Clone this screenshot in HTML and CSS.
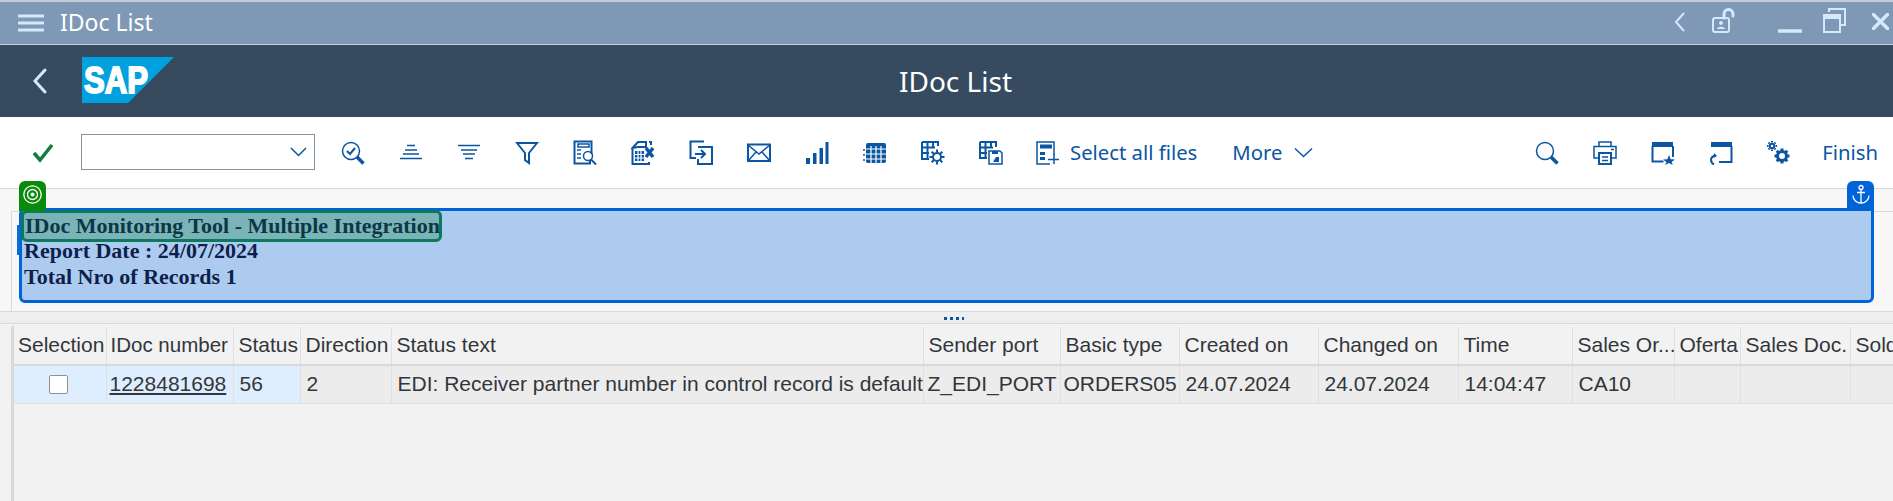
FILE: index.html
```html
<!DOCTYPE html>
<html lang="en">
<head>
<meta charset="utf-8">
<title>IDoc List</title>
<link rel="stylesheet" href="styles.css">
</head>
<body>
<div class="app">
  <div class="titlebar">
    <div class="menu-btn"><svg width="26" height="18" viewBox="0 0 26 18"><path d="M1 2h24M1 9h24M1 16h24" class="s-light2"/></svg></div>
    <div class="titlebar-text">IDoc List</div>
    <div class="window-tools">
      <svg class="wt-back" width="14" height="22" viewBox="0 0 14 22"><path d="M11 2 3 11l8 9" class="s-light"/></svg>
      <svg class="wt-lock" width="26" height="26" viewBox="0 0 26 26"><rect x="1" y="10" width="16" height="14" rx="2" class="s-light"/><path d="M12 10V6a4.500 4.500 0 0 1 9 0v2" class="s-light2"/><circle cx="9" cy="15" r="2" class="f-light"/><path d="M5 21c0-3 8-3 8 0z" class="f-light"/></svg>
      <svg class="wt-min" width="24" height="4" viewBox="0 0 24 4"><path d="M1 2h22" class="s-light3"/></svg>
      <svg class="wt-max" width="24" height="26" viewBox="0 0 24 26"><path d="M6 4V1h16v16h-4" class="s-light"/><rect x="1" y="7" width="16" height="17" class="s-light"/><rect x="1" y="7" width="16" height="4" class="f-light"/></svg>
      <svg class="wt-close" width="17" height="17" viewBox="0 0 17 17"><path d="M1.500 1.500l14 14M15.500 1.500l-14 14" class="s-light3"/></svg>
    </div>
  </div>

  <div class="appbar">
    <svg class="back" width="16" height="26" viewBox="0 0 16 26"><path d="M13 2 3 13l10 11" class="s-back"/></svg>
    <svg class="logo" width="92" height="46" viewBox="0 0 92 46"><polygon points="0,0 92,0 46,46 0,46" class="logo-bg"/><text x="2" y="36" textLength="64" lengthAdjust="spacingAndGlyphs" class="logo-text">SAP</text></svg>
    <div class="appbar-title">IDoc List</div>
  </div>

  <div class="toolbar">
    <div class="tb-left">
      <div class="tb-icon"><svg width="24" height="24" viewBox="0 0 24 24"><path d="M3 12l6 7L21 4" class="s-check"/></svg></div>
      <div class="dropdown"><svg width="17" height="10" viewBox="0 0 17 10"><path d="M1 1l7.500 7.500L16 1" class="s-ico"/></svg></div>
      <div class="tb-icon"><svg width="24" height="24" viewBox="0 0 24 24"><circle cx="10" cy="10" r="8.500" class="s-ico"/><path d="M6 10l3 3 5-6" class="s-ico2"/><path d="M16 16l6.500 6.500" class="s-ico3"/></svg></div>
      <div class="tb-icon"><svg width="24" height="24" viewBox="0 0 24 24"><path d="M8 4.500h8M6 9h12M4 13h16M1 17.500h22" class="s-ico"/></svg></div>
      <div class="tb-icon"><svg width="24" height="24" viewBox="0 0 24 24"><path d="M1 4.500h22M4 9h16M6 13h12M8 17.500h8" class="s-ico"/></svg></div>
      <div class="tb-icon"><svg width="24" height="24" viewBox="0 0 24 24"><path d="M2 2h20l-8 10v10l-4-3v-7z" class="s-ico2"/></svg></div>
      <div class="tb-icon"><svg width="24" height="26" viewBox="0 0 24 26"><path d="M17 20v3.500H1.500V1.500h17V14" class="s-ico2"/><path d="M5 4h11v3H5zM4 10h4M4 14h4M4 18h4" class="s-ico"/><circle cx="15" cy="16" r="4.500" class="s-ico"/><path d="M18 19.500l5 5" class="s-ico2"/></svg></div>
      <div class="tb-icon"><svg width="24" height="26" viewBox="0 0 24 26"><path d="M1.500 8 7 2h8v5H7zM1.500 8v16H15M18 2h2v3M18 22v2h-3" class="s-ico2"/><path d="M4 11h9v10H4z" class="f-ico"/><path d="M7 11v10M10 11v10M4 14.500h9M4 18h9" class="s-white"/><path d="M15 8l7 9M22 8l-7 9" class="s-ico3"/></svg></div>
      <div class="tb-icon"><svg width="24" height="26" viewBox="0 0 24 26"><path d="M15 1.500H1.500V18H7" class="s-ico2"/><path d="M9 7h14v17H9v-5" class="s-ico2"/><path d="M6 14h10M12 10l4 4-4 4" class="s-ico2"/></svg></div>
      <div class="tb-icon"><svg width="24" height="20" viewBox="0 0 24 20"><rect x="1" y="1.500" width="22" height="16.500" class="s-ico2"/><path d="M1 2l11 9 11-9M1 18l8-9M23 18l-8-9" class="s-ico"/></svg></div>
      <div class="tb-icon"><svg width="24" height="24" viewBox="0 0 24 24"><path d="M1 17h4v6H1zM8 12h3.500v11H8zM14.500 7H18v16h-3.500zM20.500 1h3v22h-3z" class="f-ico"/></svg></div>
      <div class="tb-icon"><svg width="24" height="24" viewBox="0 0 24 24"><rect x="3" y="2" width="20" height="20" rx="2" class="f-ico"/><path d="M3 8h20M3 13h20M3 18h20M8 5v17M13 5v17M18 5v17" class="s-white"/><path d="M1 8v2M1 13v2M1 18v2" class="s-ico"/></svg></div>
      <div class="tb-icon"><svg width="24" height="24" viewBox="0 0 24 24"><path d="M1 1h16v4M1 1v17h7M1 6.500h13M1 12h7M6.500 1v17M12 1v5" class="s-ico2"/><circle cx="16" cy="16" r="4" class="s-ico2"/><path d="M16 8.500v3M16 20.500v3M8.500 16h3M20.500 16h3M10.700 10.700l2 2M19.300 19.300l2 2M10.700 21.300l2-2M19.300 12.700l2-2" class="s-ico2"/></svg></div>
      <div class="tb-icon"><svg width="24" height="24" viewBox="0 0 24 24"><path d="M1 1h16v5M1 1v16h7M1 6.500h13M1 12h7M6.500 1v16M12 1v5" class="s-ico2"/><path d="M10 10h11l2 2v11H10z" class="s-ico"/><path d="M13 10h6v3h-6zM17 16l3 0v5h-6z" class="f-ico"/></svg></div>
      <div class="tb-text-btn tb-select">
        <svg width="24" height="24" viewBox="0 0 24 24"><path d="M14 23H1V1h17v13" class="s-ico"/><path d="M4 3.500h12v4H4zM4 11h5v3H4zM4 16h5v3H4z" class="f-ico"/><path d="M12 18.500h11M18 13v10" class="s-ico"/></svg>
        <span>Select all files</span>
      </div>
      <div class="tb-text-btn tb-more">
        <span>More</span>
        <svg width="19" height="11" viewBox="0 0 19 11"><path d="M1 1.500l8.500 8 8.500-8" class="s-ico"/></svg>
      </div>
    </div>
    <div class="tb-right">
      <div class="tb-icon"><svg width="24" height="24" viewBox="0 0 24 24"><circle cx="10" cy="10" r="8.500" class="s-ico"/><path d="M16 16l6.500 6.500" class="s-ico3"/></svg></div>
      <div class="tb-icon"><svg width="24" height="24" viewBox="0 0 24 24"><path d="M6 5V1h12v4" class="s-ico"/><path d="M6 17H1V5.500h22V17h-5" class="s-ico"/><path d="M18 8.500h3" class="s-ico"/><rect x="6" y="12" width="12" height="11" class="s-ico2"/><path d="M9 16h6M9 19.500h6" class="s-ico"/></svg></div>
      <div class="tb-icon"><svg width="24" height="24" viewBox="0 0 24 24"><path d="M1 1h21v5H1z" class="f-ico"/><path d="M1.500 5v15.500h11M22 5v11" class="s-ico2"/><polygon points="18,14 19.700,18.200 24,18.400 20.600,21 21.800,24 18,22 14.200,24 15.400,21 12,18.400 16.300,18.200" class="f-ico"/></svg></div>
      <div class="tb-icon"><svg width="24" height="24" viewBox="0 0 24 24"><path d="M2 1h21v5H2z" class="f-ico"/><path d="M22.500 5v16H10" class="s-ico2"/><path d="M7 15a4 4 0 0 0-5 3.500c0 2 1 4 3 5" class="s-ico2"/><path d="M5 12l3 3-3.500 2z" class="f-ico"/></svg></div>
      <div class="tb-icon"><svg width="24" height="24" viewBox="0 0 24 24"><circle cx="15" cy="15" r="4.500" class="s-gear"/><path d="M15 7.500v3M15 19.500v3M7.500 15h3M19.500 15h3M9.700 9.700l2 2M18.300 18.300l2 2M9.700 20.300l2-2M18.300 11.700l2-2" class="s-gear"/><circle cx="5" cy="5" r="2.200" class="s-ico2"/><path d="M5 0v1.500M5 8.500V10M0 5h1.500M8.500 5H10M1.500 1.500l1 1M7.500 7.500l1 1M1.500 8.500l1-1M7.500 2.500l1-1" class="s-ico2"/></svg></div>
      <div class="tb-text-btn tb-finish"><span>Finish</span></div>
    </div>
  </div>

  <div class="content-head">
    <div class="panel-frame">
      <div class="panel">
        <div class="tab tab-green"><svg width="21" height="21" viewBox="0 0 21 21"><circle cx="10.500" cy="10.500" r="8.700" class="s-tab"/><circle cx="10.500" cy="10.500" r="5" class="s-tab"/><circle cx="10.500" cy="10.500" r="2" class="f-tab"/></svg></div>
        <div class="tab tab-blue"><svg width="18" height="21" viewBox="0 0 18 21"><circle cx="9" cy="3.500" r="2" class="s-tab"/><path d="M9 5.500V19M5 8.500h8M1 11.500c0 4.500 4 7.500 8 7.500s8-3 8-7.500" class="s-tab"/></svg></div>
        <div class="line line-selected">IDoc Monitoring Tool - Multiple Integration</div>
        <div class="line">Report Date : 24/07/2024</div>
        <div class="line">Total Nro of Records 1</div>
      </div>
    </div>
  </div>

  <div class="sash"><span class="sash-dots"></span></div>

  <div class="table-wrap">
    <table class="grid">
      <colgroup>
        <col class="c1"><col class="c2"><col class="c3"><col class="c4"><col class="c5"><col class="c6"><col class="c7"><col class="c8"><col class="c9"><col class="c10"><col class="c11"><col class="c12"><col class="c13"><col class="c14">
      </colgroup>
      <thead>
        <tr>
          <th class="tight">Selection</th><th class="mid">IDoc number</th><th>Status</th><th>Direction</th><th>Status text</th><th>Sender port</th><th>Basic type</th><th>Created on</th><th>Changed on</th><th>Time</th><th>Sales Or...</th><th>Oferta</th><th>Sales Doc.</th><th>Sold-to party</th>
        </tr>
      </thead>
      <tbody>
        <tr>
          <td class="sel"><span class="checkbox"></span></td>
          <td class="sel link-cell"><a class="link">1228481698</a></td>
          <td class="sel">56</td>
          <td>2</td>
          <td>EDI: Receiver partner number in control record is default</td>
          <td class="tight">Z_EDI_PORT</td>
          <td class="tight tight-b">ORDERS05</td>
          <td>24.07.2024</td>
          <td>24.07.2024</td>
          <td>14:04:47</td>
          <td>CA10</td>
          <td></td><td></td><td></td>
        </tr>
      </tbody>
    </table>
  </div>
</div>
</body>
</html>
```

FILE: styles.css
```css
* { box-sizing: border-box; }
html, body { margin: 0; padding: 0; height: 501px; overflow: hidden; background: #f2f2f2; }
body { font-family: "Liberation Sans", Arial, sans-serif; }
.app { width: 1893px; height: 501px; display: flex; flex-direction: column; overflow: hidden; }

/* title bar */
.titlebar { height: 45px; flex: none; display: flex; align-items: center; background: #7e98b6; border-top: 2px solid #c3ccd6; border-bottom: 1px solid #c8d3df; color: #fff; }
.menu-btn { width: 60px; padding-left: 18px; display: flex; }
.titlebar-text { font: 23px/1 "Noto Sans", sans-serif; color: #fff; margin-top: -2px; }
.window-tools { margin-left: auto; display: flex; align-items: center; width: 220px; height: 100%; }
.wt-back { margin-top: -3px; }
.wt-lock { margin-left: 25px; margin-top: -4px; }
.wt-min { margin-left: 40px; margin-top: 16px; }
.wt-max { margin-left: 21px; margin-top: -4px; }
.wt-close { margin-left: 25px; margin-top: -3px; }
.s-light, .s-light2, .s-light3 { fill: none; stroke: #d6e8fb; }
.s-light { stroke-width: 2; }
.s-light2 { stroke-width: 3; stroke-linecap: round; }
.s-light3 { stroke-width: 3.500; stroke-linecap: round; }
.f-light { fill: #d6e8fb; }

/* shell bar */
.appbar { height: 72px; flex: none; display: flex; align-items: center; background: #364b60; }
.back { margin-left: 32px; }
.s-back { fill: none; stroke: #d6e8fb; stroke-width: 3; stroke-linecap: round; }
.logo { margin-left: 34px; margin-top: -2px; flex: none; }
.logo-bg { fill: #00a1df; }
.logo-text { font: bold 37px "Liberation Sans", sans-serif; fill: #fff; stroke: #fff; stroke-width: 1.800; }
.appbar-title { flex: 1; padding-right: 156px; text-align: center; color: #fff; font: 28px/1 "Noto Sans", sans-serif; }

/* toolbar */
.toolbar { height: 71px; flex: none; display: flex; align-items: center; justify-content: space-between; padding-left: 14px; background: #fff; color: #0a56a2; }
.tb-left, .tb-right { display: flex; align-items: center; }
.tb-icon { width: 58px; height: 30px; display: flex; align-items: center; justify-content: center; }
.dropdown { width: 234px; height: 36px; margin: -2px 9px 0 9px; border: 1px solid #89919a; display: flex; align-items: center; justify-content: flex-end; padding-right: 7px; }
.tb-text-btn { display: flex; align-items: center; gap: 10px; font: 20.300px/1 "Noto Sans", sans-serif; white-space: nowrap; }
.tb-select { margin-left: 16px; }
.tb-more { margin-left: 35px; gap: 12px; }
.tb-finish { margin-left: 14px; margin-right: 15px; }
.s-check { fill: none; stroke: #107e3e; stroke-width: 3.500; }
.s-ico, .s-ico2, .s-ico3, .s-gear { fill: none; stroke: #0a56a2; }
.s-ico { stroke-width: 1.500; }
.s-ico2 { stroke-width: 2; }
.s-ico3 { stroke-width: 3.500; }
.s-gear { stroke-width: 3; }
.f-ico { fill: #0a56a2; }
.s-white { fill: none; stroke: #fff; stroke-width: 1.200; }

/* content head */
.content-head { height: 124px; flex: none; background: #f7f7f7; border-top: 1px solid #d9d9d9; border-bottom: 1px solid #d9d9d9; padding: 22px 0 0 11px; }
.panel-frame { height: 101px; border-top: 1px solid #d9d9d9; border-left: 1px solid #d9d9d9; padding-left: 7px; }
.panel { position: relative; width: 1855px; height: 95px; margin-top: -4px; padding-left: 2px; background: #adcbef; border: 3px solid #0064d9; border-radius: 6px 0 6px 6px; font: bold 22px/26px "Liberation Serif", serif; color: #0e1f4d; }
.panel::before { content: ""; position: absolute; left: -5px; top: 14px; width: 3px; height: 30px; background: #0a6ed1; }
.tab { position: absolute; top: -30px; width: 27px; height: 30px; display: flex; align-items: center; justify-content: center; border-radius: 6px 6px 0 0; padding-bottom: 3px; }
.tab-green { left: -3px; background: #0a8a0a; }
.tab-blue { right: -3px; background: #0064d9; }
.s-tab { fill: none; stroke: #fff; stroke-width: 1.300; }
.f-tab { fill: #fff; }
.line { white-space: nowrap; }
.line-selected { width: 421px; height: 32px; margin: -1px 0 -4px -3px; padding-left: 1px; line-height: 26px; background: #7ab3b8; border: 3px solid #0b7a5c; border-radius: 6px; color: #0c3745; }

/* sash */
.sash { height: 12px; flex: none; background: #edeef0; border-bottom: 1px solid #d9d9d9; display: flex; align-items: center; justify-content: center; padding-left: 14px; }
.sash-dots { width: 20px; height: 3px; margin-top: 1px; background: repeating-linear-gradient(90deg, #0a56a2 0 3px, transparent 3px 6px); }

/* table */
.table-wrap { flex: 1; margin: 2px 0 0 11px; padding-top: 1px; border-left: 3px solid #d9d9d9; overflow: hidden; background: #f2f2f2; }
.grid { table-layout: fixed; border-collapse: collapse; width: 1956px; font-size: 21px; color: #32363a; }
.c1 { width: 92px; } .c2 { width: 127px; } .c3 { width: 67px; } .c4 { width: 91px; } .c5 { width: 532px; }
.c6 { width: 137px; } .c7 { width: 119px; } .c8 { width: 139px; } .c9 { width: 140px; } .c10 { width: 114px; }
.c11 { width: 102px; } .c12 { width: 66px; } .c13 { width: 110px; } .c14 { width: 120px; }
.grid th { height: 38px; padding: 0 0 2px 5px; font-weight: normal; text-align: left; white-space: nowrap; overflow: hidden; background: #f2f2f2; border-right: 1px solid #e0e0e0; border-bottom: 2px solid #d9d9d9; }
.grid td { height: 38px; padding: 0 0 0 6px; white-space: nowrap; overflow: hidden; background: #ececec; border-right: 1px solid #e0e0e0; border-bottom: 1px solid #e0e0e0; }
.grid th.tight { padding-left: 4px; }
.grid th.mid { padding-left: 4px; font-size: 20.500px; }
.grid td.tight { padding-left: 4px; }
.grid td.tight-b { padding-left: 3px; }
.grid td.sel { background: #deeeff; }
.grid td.link-cell { padding-left: 3px; }
.link { color: #32363a; text-decoration: underline; }
.checkbox { display: block; width: 19px; height: 19px; margin: 0 auto; position: relative; left: -4px; background: #fff; border: 1px solid #89919a; border-radius: 2px; }
```
